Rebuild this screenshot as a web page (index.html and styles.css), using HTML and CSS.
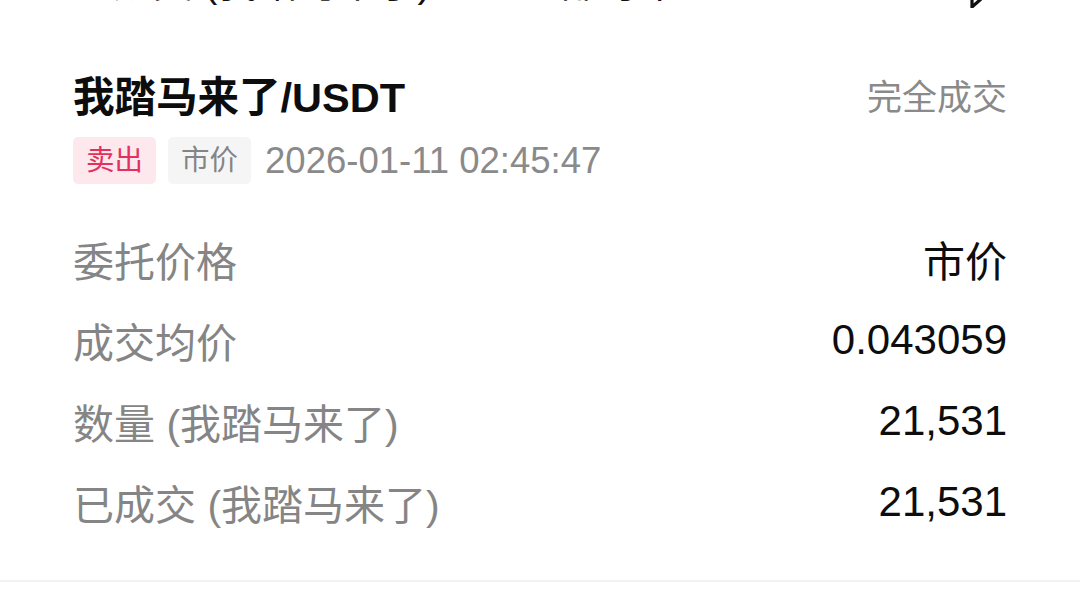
FILE: index.html
```html
<!DOCTYPE html>
<html lang="zh-CN">
<head>
    <meta charset="UTF-8">
    <meta name="viewport" content="width=device-width, initial-scale=1.0">
    <title>订单详情</title>
    <link rel="stylesheet" href="styles.css">
</head>
<body>
    <div class="prev-row">
        <span class="prev-text">已成交 (我踏马来了)&nbsp;&nbsp;&nbsp;&nbsp;&nbsp;&nbsp;&nbsp;&nbsp;全部订单</span>
        <svg class="prev-icon" width="16" height="12" viewBox="0 0 16 12">
            <path d="M3 -4 L3 9 L12 1" fill="none" stroke="#111" stroke-width="3.2" stroke-linejoin="miter"/>
        </svg>
    </div>

    <div class="order-card">
        <div class="order-head">
            <div class="pair">我踏马来了/USDT</div>
            <div class="status">完全成交</div>
        </div>
        <div class="tags">
            <span class="tag tag-sell">卖出</span>
            <span class="tag tag-type">市价</span>
            <span class="time">2026-01-11 02:45:47</span>
        </div>
        <div class="rows">
            <div class="row">
                <span class="label">委托价格</span>
                <span class="value">市价</span>
            </div>
            <div class="row">
                <span class="label">成交均价</span>
                <span class="value">0.043059</span>
            </div>
            <div class="row">
                <span class="label">数量 (我踏马来了)</span>
                <span class="value">21,531</span>
            </div>
            <div class="row">
                <span class="label">已成交 (我踏马来了)</span>
                <span class="value">21,531</span>
            </div>
        </div>
    </div>
</body>
</html>
```

FILE: styles.css
```css
body {
    margin: 0;
    background: #fff;
    font-family: "Liberation Sans", "Noto Sans CJK SC", sans-serif;
    color: #111;
}
.prev-row {
    height: 8px;
    overflow: hidden;
    padding: 0 73px 0 73px;
    display: flex;
    justify-content: space-between;
    align-items: flex-end;
}
.prev-text {
    font-size: 40px;
    line-height: 1;
    margin-bottom: 5px;
    white-space: nowrap;
}
.prev-icon {
    margin-right: 22px;
    margin-bottom: -2px;
}
.order-card {
    padding: 58px 73px 38px 73px;
    border-bottom: 2px solid #f3f3f3;
}
.order-head {
    display: flex;
    justify-content: space-between;
    align-items: center;
    height: 56px;
}
.pair {
    font-size: 41.5px;
    font-weight: bold;
    color: #0d0d0d;
}
.status {
    font-size: 35px;
    color: #8a8a8a;
}
.tags {
    display: flex;
    align-items: center;
    margin-top: 15px;
    height: 47px;
}
.tag {
    height: 47px;
    line-height: 47px;
    padding: 0 13px;
    font-size: 28.5px;
    border-radius: 5px;
    margin-right: 12px;
}
.tag-sell {
    background: #fde8ed;
    color: #e2315d;
}
.tag-type {
    background: #f5f5f5;
    color: #858585;
}
.time {
    margin-left: 2px;
    font-size: 36.5px;
    color: #8a8a8a;
}
.rows {
    margin-top: 34px;
}
.row {
    display: flex;
    justify-content: space-between;
    align-items: center;
    height: 81px;
}
.label {
    font-size: 41px;
    color: #858585;
}
.value {
    font-size: 42px;
    color: #0d0d0d;
}
```
